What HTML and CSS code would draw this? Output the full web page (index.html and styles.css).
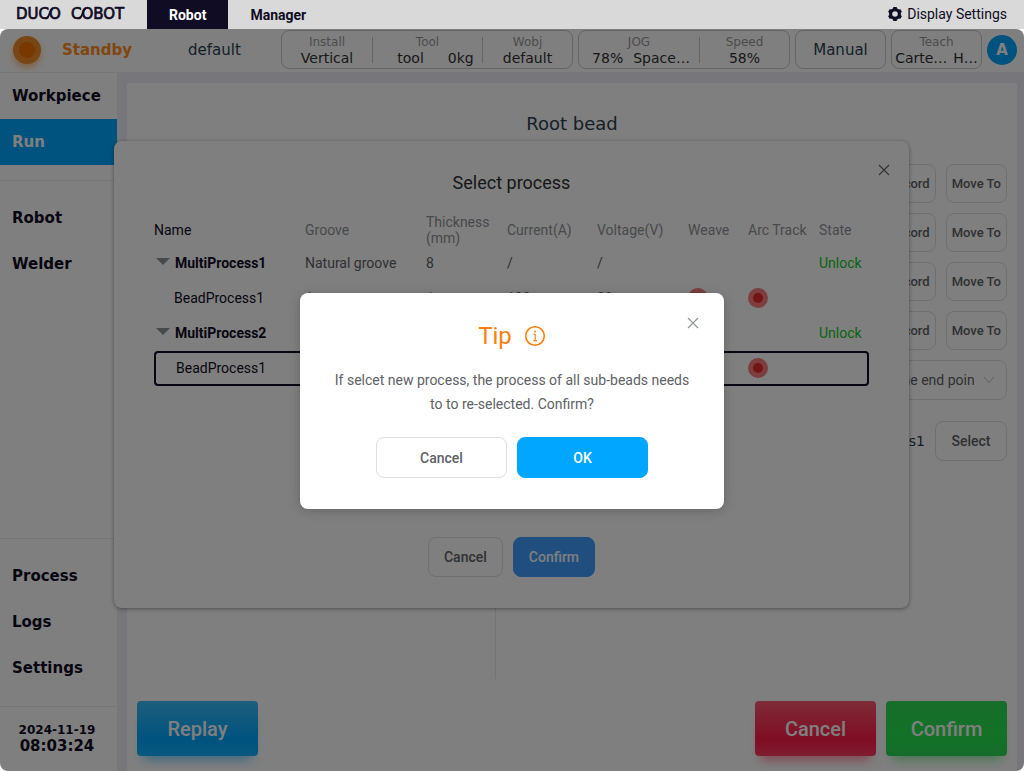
FILE: index.html
```html
<!DOCTYPE html>
<html lang="en">
<head>
    <meta charset="UTF-8">
    <meta name="viewport" content="width=device-width, initial-scale=1.0">
    <title>DUCO COBOT</title>
    <link rel="stylesheet" href="styles.css">
</head>
<body>
    <div class="topbar">
        <svg class="logo" width="147" height="29" viewBox="0 0 147 29" role="img" aria-label="DUCO COBOT">
            <text x="16" y="19">DUCO</text>
            <text x="71" y="19">COBOT</text>
            <path d="M46 18.6C50 17.6 49 9.4 53 8.4"/>
            <path d="M79 18.6C83 17.6 82 9.4 86 8.4"/>
        </svg>
        <nav class="tabs">
            <a href="#" class="tab active">Robot</a>
            <a href="#" class="tab">Manager</a>
        </nav>
        <a href="#" class="display-settings">
            <svg width="16" height="16" viewBox="0 0 16 16">
                <circle cx="8" cy="8" r="4.4" fill="none" stroke="#100c24" stroke-width="3.2"/>
                <g stroke="#100c24" stroke-width="3.6">
                    <path d="M8 1V4M8 12V15M1.9 4.5L4.5 6M11.5 10L14.1 11.5M1.9 11.5L4.5 10M11.5 6L14.1 4.5"/>
                </g>
            </svg>
            <span>Display Settings</span>
        </a>
    </div>

    <div class="app">
        <header class="header">
            <span class="status-dot"></span>
            <span class="status-text">Standby</span>
            <span class="project">default</span>

            <div class="pills">
                <div class="pill">
                    <div class="cell">
                        <span class="cell-label">Install</span>
                        <span class="cell-value">Vertical</span>
                    </div>
                    <div class="cell cell-tool">
                        <span class="cell-label">Tool</span>
                        <span class="cell-value"><span>tool</span><span>0kg</span></span>
                    </div>
                    <div class="cell">
                        <span class="cell-label">Wobj</span>
                        <span class="cell-value">default</span>
                    </div>
                </div>
                <div class="pill">
                    <div class="cell cell-jog">
                        <span class="cell-label">JOG</span>
                        <span class="cell-value"><span>78%</span><span>Space…</span></span>
                    </div>
                    <div class="cell">
                        <span class="cell-label">Speed</span>
                        <span class="cell-value">58%</span>
                    </div>
                </div>
                <button type="button" class="pill pill-btn">Manual</button>
                <div class="pill">
                    <div class="cell cell-teach">
                        <span class="cell-label">Teach</span>
                        <span class="cell-value"><span>Carte…</span><span>H…</span></span>
                    </div>
                </div>
                <button type="button" class="avatar">A</button>
            </div>
        </header>

        <div class="body">
            <aside class="sidebar">
                <nav class="nav-group">
                    <a href="#" class="nav-item">Workpiece</a>
                    <a href="#" class="nav-item active">Run</a>
                </nav>
                <nav class="nav-group nav-grow">
                    <a href="#" class="nav-item">Robot</a>
                    <a href="#" class="nav-item">Welder</a>
                </nav>
                <nav class="nav-group">
                    <a href="#" class="nav-item">Process</a>
                    <a href="#" class="nav-item">Logs</a>
                    <a href="#" class="nav-item">Settings</a>
                </nav>
                <div class="clock">
                    <span class="date">2024-11-19</span>
                    <span class="time">08:03:24</span>
                </div>
            </aside>

            <main class="panel">
                <h1 class="panel-title">Root bead</h1>
                <div class="columns">
                    <div class="preview"></div>
                    <div class="form">
                        <div class="form-row">
                            <button type="button" class="btn btn-small">Record</button>
                            <button type="button" class="btn btn-small">Move To</button>
                        </div>
                        <div class="form-row">
                            <button type="button" class="btn btn-small">Record</button>
                            <button type="button" class="btn btn-small">Move To</button>
                        </div>
                        <div class="form-row">
                            <button type="button" class="btn btn-small">Record</button>
                            <button type="button" class="btn btn-small">Move To</button>
                        </div>
                        <div class="form-row">
                            <button type="button" class="btn btn-small">Record</button>
                            <button type="button" class="btn btn-small">Move To</button>
                        </div>
                        <div class="form-row">
                            <div class="select-wrap">
                                <select class="select" aria-label="End point">
                                    <option>Same to the end point</option>
                                </select>
                                <svg class="chevron" width="12" height="8" viewBox="0 0 12 8">
                                    <path d="M1 1L6 6.5L11 1"/>
                                </svg>
                            </div>
                        </div>
                        <div class="form-row process-row">
                            <span class="process-name">BeadProcess1</span>
                            <button type="button" class="btn btn-select">Select</button>
                        </div>
                    </div>
                </div>
                <div class="actions">
                    <button type="button" class="action replay">Replay</button>
                    <button type="button" class="action cancel">Cancel</button>
                    <button type="button" class="action confirm">Confirm</button>
                </div>
            </main>
        </div>

        <!-- Process selection -->
        <div class="layer layer-process">
            <section class="dialog process-dialog" role="dialog" aria-labelledby="process-title">
                <button type="button" class="close" aria-label="Close">
                    <svg width="12" height="12" viewBox="0 0 12 12"><path d="M1 1L11 11M11 1L1 11"/></svg>
                </button>
                <h2 class="dialog-title" id="process-title">Select process</h2>
                <div class="table-wrap">
                    <table class="process-table">
                        <colgroup>
                            <col class="c-name"><col class="c-groove"><col class="c-thick"><col class="c-current">
                            <col class="c-voltage"><col class="c-weave"><col class="c-arc"><col class="c-state">
                        </colgroup>
                        <thead>
                            <tr>
                                <th class="name">Name</th>
                                <th>Groove</th>
                                <th>Thickness (mm)</th>
                                <th>Current(A)</th>
                                <th>Voltage(V)</th>
                                <th>Weave</th>
                                <th>Arc Track</th>
                                <th>State</th>
                            </tr>
                        </thead>
                        <tbody>
                            <tr>
                                <td class="parent"><span class="caret"></span>MultiProcess1</td>
                                <td>Natural groove</td>
                                <td>8</td>
                                <td>/</td>
                                <td>/</td>
                                <td></td>
                                <td></td>
                                <td class="unlock">Unlock</td>
                            </tr>
                            <tr>
                                <td class="child">BeadProcess1</td>
                                <td>/</td>
                                <td>/</td>
                                <td>100</td>
                                <td>20</td>
                                <td><span class="dot"></span></td>
                                <td><span class="dot"></span></td>
                                <td></td>
                            </tr>
                            <tr>
                                <td class="parent"><span class="caret"></span>MultiProcess2</td>
                                <td>Natural groove</td>
                                <td>8</td>
                                <td>/</td>
                                <td>/</td>
                                <td></td>
                                <td></td>
                                <td class="unlock">Unlock</td>
                            </tr>
                            <tr class="selected">
                                <td class="child">BeadProcess1</td>
                                <td>/</td>
                                <td>/</td>
                                <td>100</td>
                                <td>20</td>
                                <td><span class="dot"></span></td>
                                <td><span class="dot"></span></td>
                                <td></td>
                            </tr>
                        </tbody>
                    </table>
                </div>
                <div class="dialog-footer">
                    <button type="button" class="btn btn-dialog">Cancel</button>
                    <button type="button" class="btn btn-dialog btn-primary">Confirm</button>
                </div>
            </section>
        </div>

        <!-- Tip -->
        <div class="layer layer-tip">
            <section class="dialog tip" role="alertdialog" aria-labelledby="tip-title">
                <button type="button" class="close" aria-label="Close">
                    <svg width="12" height="12" viewBox="0 0 12 12"><path d="M1 1L11 11M11 1L1 11"/></svg>
                </button>
                <h2 class="tip-title" id="tip-title">
                    Tip
                    <svg width="22" height="22" viewBox="0 0 22 22">
                        <circle cx="11" cy="11" r="9.3" fill="none" stroke="#ff7f0e" stroke-width="1.6"/>
                        <circle cx="11" cy="6.6" r="1" fill="#ff7f0e"/>
                        <path d="M9.6 9.4H11.2V15.4M9.4 15.6H13" fill="none" stroke="#ff7f0e" stroke-width="1.1"/>
                    </svg>
                </h2>
                <p class="tip-text">If selcet new process, the process of all sub-beads needs to to re-selected. Confirm?</p>
                <div class="tip-footer">
                    <button type="button" class="btn btn-tip">Cancel</button>
                    <button type="button" class="btn btn-tip btn-ok">OK</button>
                </div>
            </section>
        </div>
    </div>
</body>
</html>
```

FILE: styles.css
```css
* {
    margin: 0;
    padding: 0;
    box-sizing: border-box;
}

body {
    display: flex;
    flex-direction: column;
    height: 100vh;
    background: #fff;
    font-family: Roboto, "Liberation Sans", sans-serif;
    font-size: 14px;
    color: #333;
}

a {
    color: inherit;
    text-decoration: none;
}

button {
    font-family: inherit;
    cursor: pointer;
}

/* Top bar */
.topbar {
    display: flex;
    height: 29px;
    flex-shrink: 0;
    background: #d9d9d9;
    color: #100c24;
}

.logo text {
    font-family: "DejaVu Sans", sans-serif;
    font-size: 15px;
    fill: #100c24;
    stroke: #100c24;
    stroke-width: 0.7;
}

.logo path {
    fill: none;
    stroke: #100c24;
    stroke-width: 1.8;
}

.tabs {
    display: flex;
}

.tab {
    padding: 0 22px;
    line-height: 30px;
    font-weight: bold;
}

.tab.active {
    background: #100c24;
    color: #fff;
}

.display-settings {
    display: flex;
    align-items: center;
    gap: 4px;
    margin-left: auto;
    padding: 0 17px 1px 0;
}

/* Application */
.app {
    position: relative;
    display: flex;
    flex-direction: column;
    flex: 1;
    min-height: 0;
    border-radius: 8px;
    overflow: hidden;
    background: #fff;
}

.header {
    display: flex;
    align-items: center;
    height: 44px;
    flex-shrink: 0;
    padding: 0 7px 2px 13px;
    border-bottom: 1px solid #eeeef6;
    font-family: "DejaVu Sans", sans-serif;
    font-size: 15px;
}

.status-dot {
    width: 28px;
    height: 28px;
    margin-right: 21px;
    border: 6px solid #f08c28;
    border-radius: 50%;
    background: #f07000;
    box-shadow: 0 4px 6px rgba(255, 140, 40, 0.5);
}

.status-text {
    margin-right: 56px;
    font-weight: bold;
    color: #ff8c1a;
}

.project {
    color: #2c3e50;
}

.pills {
    display: flex;
    align-items: center;
    gap: 5px;
    margin-left: auto;
}

.pill {
    display: flex;
    align-items: center;
    height: 39px;
    border: 1px solid #c8c8c8;
    border-radius: 8px;
    background: transparent;
}

.pill-btn {
    justify-content: center;
    width: 91px;
    font-size: 15px;
    color: #2c3e50;
}

.cell {
    display: flex;
    flex-direction: column;
    align-items: center;
    width: 90px;
}

.cell + .cell {
    border-left: 1px solid #c8c8c8;
    height: 26px;
    justify-content: center;
}

.cell-tool {
    width: 110px;
}

.cell-tool .cell-value {
    gap: 24px;
    padding-left: 16px;
}

.cell-jog {
    width: 120px;
}

.cell-jog .cell-value {
    gap: 10px;
    padding-left: 4px;
}

.cell-teach {
    width: 89px;
}

.cell-teach .cell-value {
    gap: 6px;
}

.cell-label {
    line-height: 16px;
    font-size: 12px;
    color: #999;
}

.cell-value {
    display: flex;
    line-height: 16px;
    font-size: 14px;
    white-space: nowrap;
    color: #303133;
}

.avatar {
    width: 30px;
    height: 30px;
    border: none;
    border-radius: 50%;
    background: #00a6ff;
    font-family: "DejaVu Sans", sans-serif;
    font-size: 15px;
    font-weight: bold;
    color: #fff;
}

.body {
    display: flex;
    flex: 1;
    min-height: 0;
    background: #eeeef6;
}

/* Sidebar */
.sidebar {
    display: flex;
    flex-direction: column;
    width: 118px;
    background: #fff;
    border-right: 1px solid #eeeef6;
    font-family: "DejaVu Sans", sans-serif;
    font-size: 15px;
    font-weight: bold;
    color: #100c24;
}

.nav-group {
    padding: 14px 0 15px;
    border-bottom: 1px solid #ededf2;
}

.nav-group:first-child {
    padding-top: 0;
}

.nav-grow {
    flex: 1;
}

.nav-item {
    display: block;
    padding-left: 12px;
    line-height: 46px;
}

.nav-item.active {
    background: #00a6ff;
    color: #fff;
}

.clock {
    display: flex;
    flex-direction: column;
    align-items: center;
    height: 64px;
    padding: 15px 3px 0 0;
}

.date {
    line-height: 16px;
    font-size: 12px;
}

.time {
    line-height: 16px;
}

/* Panel */
.panel {
    display: flex;
    flex-direction: column;
    flex: 1;
    margin: 10px 7px 0 9px;
    padding: 0 10px 15px;
    background: #fff;
}

.panel-title {
    padding-top: 25px;
    line-height: 32px;
    text-align: center;
    font-family: "DejaVu Sans", sans-serif;
    font-size: 18px;
    font-weight: normal;
    color: #2c3e50;
}

.columns {
    display: flex;
    flex: 1;
    margin: 14px 0 22px;
}

.preview {
    width: 359px;
    border-right: 1px solid #e8e8ee;
}

.form {
    display: flex;
    flex-direction: column;
    flex: 1;
    gap: 10px;
    padding-top: 10px;
}

.form-row {
    display: flex;
    justify-content: flex-end;
    align-items: center;
    gap: 10px;
}

.process-row {
    padding-top: 11px;
}

.process-name {
    font-family: "DejaVu Sans", sans-serif;
    color: #2c3e50;
}

.btn {
    height: 40px;
    border: 1px solid #dcdfe6;
    border-radius: 8px;
    background: #fff;
    font-size: 14px;
    font-weight: 500;
    color: #606266;
}

.btn-small {
    height: 39px;
    padding: 0 5px;
    font-size: 13px;
}

.btn-select {
    width: 72px;
}

.select-wrap {
    position: relative;
    width: 177px;
}

.select {
    width: 100%;
    height: 40px;
    padding: 0 32px 0 12px;
    border: 1px solid #dcdfe6;
    border-radius: 8px;
    appearance: none;
    background: #fff;
    font-family: inherit;
    font-size: 14px;
    color: #606266;
}

.chevron {
    position: absolute;
    top: 16px;
    right: 12px;
    fill: none;
    stroke: #c0c4cc;
}

.actions {
    display: flex;
    gap: 10px;
}

.action {
    width: 121px;
    height: 55px;
    border: none;
    border-radius: 4px;
    font-size: 20px;
    font-weight: 500;
    color: #fff;
}

.replay {
    margin-right: auto;
    background: linear-gradient(#3cbcf8, #00a6ff 70%, #14b0ff);
    box-shadow: 0 10px 10px -6px rgba(0, 166, 255, 0.5);
}

.cancel {
    background: linear-gradient(#fc5872, #ff1a48 70%, #ff3c62);
    box-shadow: 0 10px 10px -6px rgba(255, 26, 72, 0.5);
}

.confirm {
    background: linear-gradient(#2cdc54, #28e450 70%, #2cd854);
    box-shadow: 0 10px 10px -6px rgba(40, 220, 80, 0.5);
}

/* Dialogs */
.layer {
    position: absolute;
    inset: 0;
    display: flex;
    align-items: center;
    justify-content: center;
}

.layer-process {
    padding: 0 1px 51px 0;
}

.layer-tip {
    padding-top: 2px;
    background: rgba(0, 0, 0, 0.5);
}

.dialog {
    position: relative;
    border-radius: 8px;
    background: #fff;
}

.close {
    position: absolute;
    top: 20px;
    right: 21px;
    display: flex;
    padding: 4px;
    border: none;
    background: none;
}

.close path {
    stroke: #909399;
    stroke-width: 1.1;
}

.process-dialog {
    display: flex;
    flex-direction: column;
    width: 795px;
    min-height: 467px;
    padding: 30px 40px 31px;
    box-shadow: 0 1px 4px rgba(0, 0, 0, 0.4);
}

.process-dialog .close {
    top: 19px;
    right: 15px;
}

.process-dialog .close path {
    stroke: #606266;
}

.dialog-title {
    margin-bottom: 18px;
    line-height: 24px;
    text-align: center;
    font-size: 18px;
    font-weight: normal;
    color: #303133;
}

.table-wrap {
    flex: 1;
}

.process-table {
    width: 100%;
    table-layout: fixed;
    border-collapse: separate;
    border-spacing: 0;
}

.c-name { width: 151px; }
.c-groove { width: 121px; }
.c-thick { width: 81px; }
.c-current { width: 90px; }
.c-voltage { width: 91px; }
.c-weave { width: 60px; }
.c-arc { width: 71px; }

.process-table th {
    height: 33px;
    line-height: 16px;
    text-align: left;
    font-weight: normal;
    color: #909399;
}

.process-table td {
    height: 35px;
    padding-bottom: 2px;
    color: #606266;
}

.process-table th.name,
.process-table td.child {
    color: #100c24;
}

.process-table td.parent {
    font-weight: bold;
    color: #100c24;
}

.process-table td.child {
    padding-left: 20px;
}

.process-table td.unlock {
    color: #12c822;
}

.caret {
    display: inline-block;
    margin: 0 5px 3px 2px;
    border: 7px solid transparent;
    border-top-color: #909399;
    border-bottom: none;
}

.dot {
    display: block;
    width: 20px;
    height: 20px;
    border: 5px solid #f87c7c;
    border-radius: 50%;
    background: #e82828;
}

.selected td {
    border-top: 2px solid #100c24;
    border-bottom: 2px solid #100c24;
}

.selected td:first-child {
    border-left: 2px solid #100c24;
    border-radius: 4px 0 0 4px;
}

.selected td:last-child {
    border-right: 2px solid #100c24;
    border-radius: 0 4px 4px 0;
}

.dialog-footer {
    display: flex;
    justify-content: center;
    gap: 10px;
}

.btn-dialog {
    padding: 0 15px;
}

.btn-primary {
    border-color: #409eff;
    background: #409eff;
    color: #fff;
}

/* Tip */
.tip {
    width: 424px;
    padding: 28px 30px 31px;
    text-align: center;
    box-shadow: 0 2px 12px rgba(0, 0, 0, 0.2);
}

.tip-title {
    display: flex;
    align-items: center;
    justify-content: center;
    gap: 12px;
    margin-bottom: 17px;
    line-height: 30px;
    font-size: 24px;
    font-weight: normal;
    color: #ff7f0e;
}

.tip-text {
    margin-bottom: 21px;
    line-height: 24px;
    color: #606266;
}

.tip-footer {
    display: flex;
    justify-content: center;
    gap: 10px;
}

.btn-tip {
    width: 131px;
    height: 41px;
}

.btn-ok {
    border-color: #00a6ff;
    background: #00a6ff;
    color: #fff;
}
```
